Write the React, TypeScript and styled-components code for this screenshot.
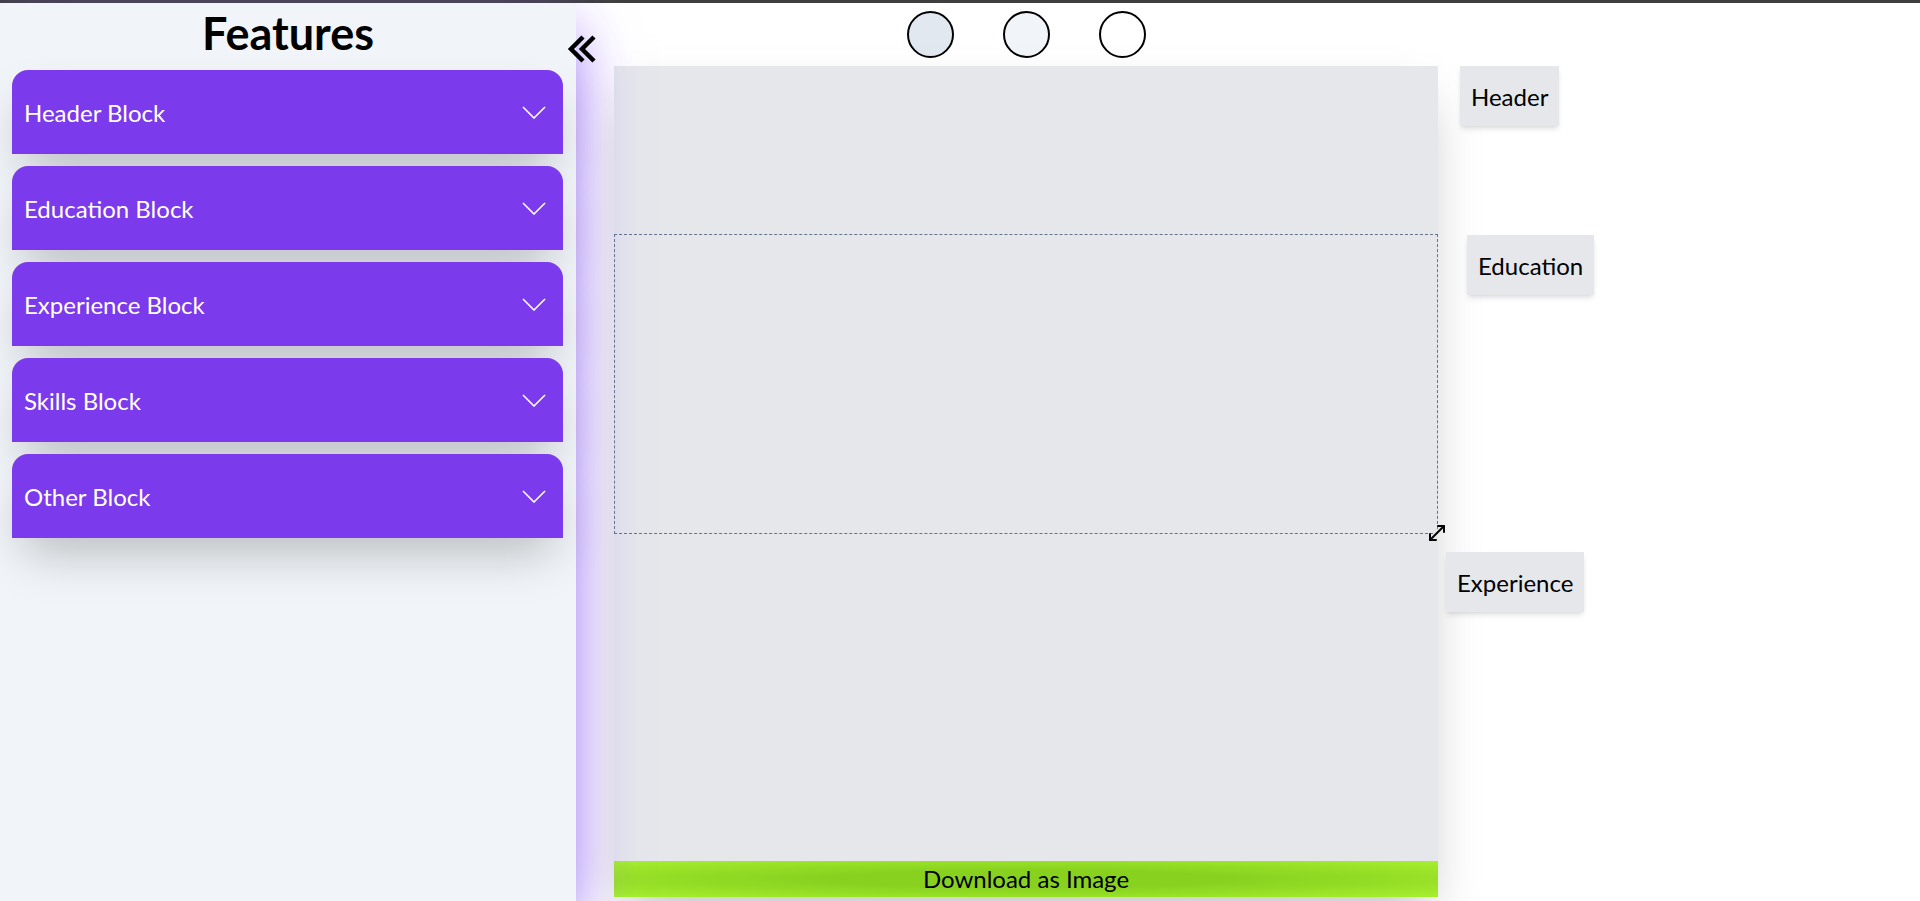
import React from 'react';
import styled, { createGlobalStyle } from 'styled-components';
import { MoveDiagonal } from 'lucide-react';

const GlobalStyle = createGlobalStyle`
  html, body { margin: 0; padding: 0; }
  body {
    font-family: Lato, "Open Sans", sans-serif;
    background: #ffffff;
    overflow: hidden;
  }
  * { box-sizing: border-box; }
`;

const Page = styled.div`
  width: 1920px;
  height: 901px;
  display: flex;
  flex-direction: column;
`;

const TopBar = styled.div`
  height: 3px;
  flex-shrink: 0;
  background: #3f3f3f;
`;

const Body = styled.div`
  flex: 1;
  display: flex;
  min-height: 0;
`;

const Sidebar = styled.aside`
  position: relative;
  z-index: 1;
  width: 576px;
  flex-shrink: 0;
  background: #f1f5f9;
  box-shadow: 0 25px 60px -6px #8b5cf6;
`;

const Heading = styled.h1`
  margin: 0;
  height: 67px;
  padding-top: 3px;
  text-align: center;
  font-size: 45px;
  font-weight: 700;
  line-height: 1.2;
  color: #000;
`;

const BlockList = styled.div`
  display: flex;
  flex-direction: column;
  gap: 12px;
  padding: 0 13px 0 12px;
`;

const BlockCard = styled.button`
  height: 84px;
  display: flex;
  align-items: center;
  justify-content: space-between;
  padding: 0 17px 0 12px;
  border: none;
  border-radius: 16px 16px 0 0;
  background: #7c3aed;
  color: #fff;
  font-family: inherit;
  font-size: 24px;
  text-align: left;
  box-shadow: 0 25px 50px -12px rgba(0, 0, 0, 0.25);
  cursor: pointer;
`;

const CollapseButton = styled.button`
  position: absolute;
  top: 31px;
  right: -23px;
  width: 32px;
  height: 30px;
  padding: 0;
  border: none;
  background: transparent;
  cursor: pointer;
  display: flex;
`;

const Main = styled.main`
  flex: 1;
  display: flex;
  padding-left: 38px;
  background: #fff;
`;

const CanvasColumn = styled.div`
  width: 824px;
  flex-shrink: 0;
  display: flex;
  flex-direction: column;
`;

const ThemeRow = styled.div`
  height: 63px;
  display: flex;
  align-items: center;
  justify-content: center;
  gap: 49px;
`;

const ThemeDot = styled.button<{ $fill: string }>`
  width: 47px;
  height: 47px;
  padding: 0;
  border-radius: 50%;
  border: 2px solid #000;
  background: ${(p) => p.$fill};
  cursor: pointer;
`;

const Sheet = styled.div`
  display: flex;
  flex-direction: column;
  box-shadow: 0 25px 50px -12px rgba(0, 0, 0, 0.25);
`;

const Canvas = styled.div`
  height: 795px;
  background: #e5e7eb;
  padding-top: 168px;
`;

const DashedBlock = styled.div`
  position: relative;
  height: 300px;
  border: 1px dashed #64748b;
`;

const ResizeHandle = styled.span`
  position: absolute;
  right: -12px;
  bottom: -12px;
  width: 24px;
  height: 24px;
  display: flex;
  color: #000;
`;

const DownloadBar = styled.button`
  height: 36px;
  border: none;
  padding: 0;
  background: radial-gradient(ellipse at center, #88d11f 35%, #a6ef2f 100%);
  font-family: inherit;
  font-size: 24px;
  line-height: 36px;
  color: #000;
  cursor: pointer;
`;

const LabelsColumn = styled.div`
  position: relative;
  flex: 1;
`;

const SectionLabel = styled.div<{ $left: number; $top: number }>`
  position: absolute;
  left: ${(p) => p.$left}px;
  top: ${(p) => p.$top}px;
  height: 60px;
  padding: 0 11px;
  display: flex;
  align-items: center;
  background: #e5e7eb;
  font-size: 24px;
  color: #000;
  box-shadow: 0 4px 6px -1px rgba(0, 0, 0, 0.1), 0 2px 4px -2px rgba(0, 0, 0, 0.1);
`;

const Chevron = () => (
  <svg width="24" height="13" viewBox="0 0 24 13" fill="none">
    <polyline points="1,1 12,12 23,1" stroke="#fff" strokeWidth="1.6" />
  </svg>
);

const DoubleChevron = () => (
  <svg width="32" height="30" viewBox="0 0 32 30" fill="none">
    <polyline points="16,3 4,15 16,27" stroke="#000" strokeWidth="4.5" />
    <polyline points="27,3 15,15 27,27" stroke="#000" strokeWidth="4.5" />
  </svg>
);

const blocks = ['Header Block', 'Education Block', 'Experience Block', 'Skills Block', 'Other Block'];
const themes = ['#e2e8f0', '#f1f5f9', '#ffffff'];
const labels = [
  { text: 'Header', left: 22, top: 63 },
  { text: 'Education', left: 29, top: 232 },
  { text: 'Experience', left: 8, top: 549 },
];

export default function App() {
  return (
    <Page>
      <GlobalStyle />
      <TopBar />
      <Body>
        <Sidebar>
          <Heading>Features</Heading>
          <BlockList>
            {blocks.map((b) => (
              <BlockCard key={b}>
                <span>{b}</span>
                <Chevron />
              </BlockCard>
            ))}
          </BlockList>
          <CollapseButton aria-label="Collapse">
            <DoubleChevron />
          </CollapseButton>
        </Sidebar>
        <Main>
          <CanvasColumn>
            <ThemeRow>
              {themes.map((t) => (
                <ThemeDot key={t} $fill={t} />
              ))}
            </ThemeRow>
            <Sheet>
              <Canvas>
                <DashedBlock>
                  <ResizeHandle>
                    <MoveDiagonal size={24} strokeWidth={2} />
                  </ResizeHandle>
                </DashedBlock>
              </Canvas>
              <DownloadBar>Download as Image</DownloadBar>
            </Sheet>
          </CanvasColumn>
          <LabelsColumn>
            {labels.map((l) => (
              <SectionLabel key={l.text} $left={l.left} $top={l.top}>
                {l.text}
              </SectionLabel>
            ))}
          </LabelsColumn>
        </Main>
      </Body>
    </Page>
  );
}
